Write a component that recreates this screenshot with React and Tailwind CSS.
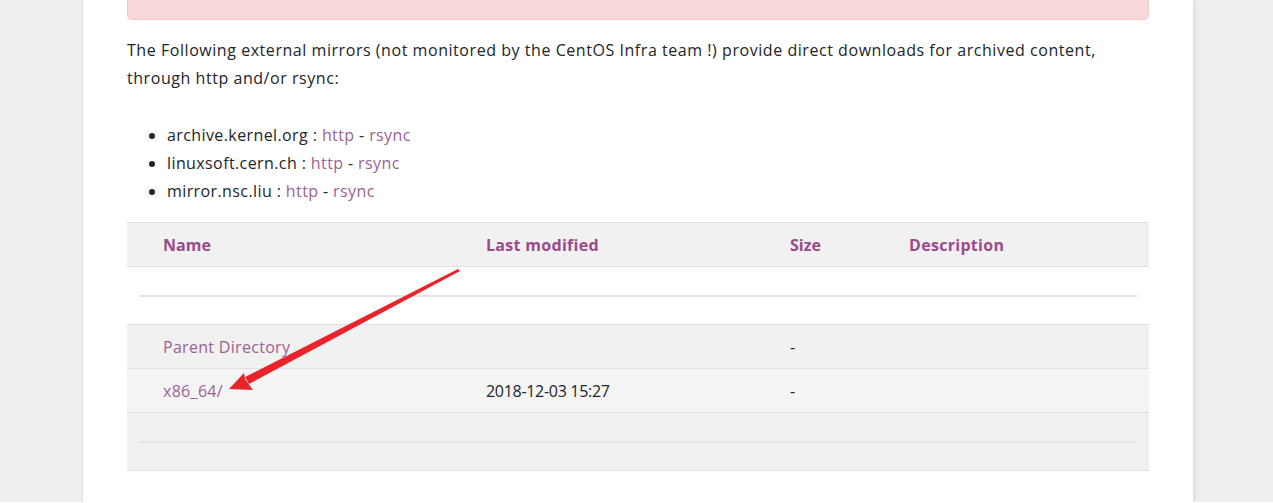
import React from 'react';

const mirrors = [
  { host: 'archive.kernel.org' },
  { host: 'linuxsoft.cern.ch' },
  { host: 'mirror.nsc.liu' },
];

function HrRow({ bg }) {
  return (
    <tr className={`${bg} border-b border-[#dee2e6]`}>
      <td colSpan={4} className="h-[58px] px-3">
        <div className="border-t-2 border-[#e4e4e6]" />
      </td>
    </tr>
  );
}

export default function App() {
  return (
    <div className="min-h-[503px] bg-[#eeeeee] font-['Open_Sans',sans-serif] text-[16px] text-[#212529]">
      <div className="ml-[82px] w-[1111px] min-h-[503px] bg-white border-l border-[#e0e0e0] shadow-[2px_0_3px_rgba(0,0,0,0.08)] relative">
        <div className="px-[44px]">
          {/* Alert */}
          <div className="h-[21px] -mt-[1px] w-[1022px] rounded-b-[5px] bg-[#f8d7da] border border-t-0 border-[#f5c6cb]" />

          <p className="mt-[16px] leading-[28px] tracking-[0.55px]">
            The Following external mirrors (not monitored by the CentOS Infra team !) provide direct downloads for archived content,
            <br />
            through http and/or rsync:
          </p>

          <ul className="mt-[29px] list-disc pl-[40px] leading-[28px] tracking-[0.4px]">
            {mirrors.map(m => (
              <li key={m.host}>
                {m.host} : <a href="#" className="text-[#9c6293]">http</a> - <a href="#" className="text-[#9c6293]">rsync</a>
              </li>
            ))}
          </ul>

          <table className="mt-[17px] w-[1022px] border-collapse text-left">
            <thead>
              <tr className="bg-[#f1f1f1] border-y border-[#dee2e6] h-[44px]">
                <th className="pl-[36px] w-[359px] font-bold text-[#9b4a8a]">Name</th>
                <th className="w-[304px] font-bold text-[#9b4a8a] tracking-[0.3px]">Last modified</th>
                <th className="w-[119px] font-bold text-[#9b4a8a]">Size</th>
                <th className="font-bold text-[#9b4a8a] tracking-[0.3px]">Description</th>
              </tr>
            </thead>
            <tbody>
              <HrRow bg="bg-white" />
              <tr className="bg-[#f1f1f1] border-b border-[#dee2e6] h-[44px]">
                <td className="pl-[36px] tracking-[0.3px]"><a href="#" className="text-[#9c6293]">Parent Directory</a></td>
                <td></td>
                <td>-</td>
                <td></td>
              </tr>
              <tr className="bg-[#f4f4f4] border-b border-[#dee2e6] h-[44px]">
                <td className="pl-[36px] tracking-[0.3px]"><a href="#" className="text-[#9c6293]">x86_64/</a></td>
                <td className="tracking-[-0.3px]">2018-12-03 15:27</td>
                <td>-</td>
                <td></td>
              </tr>
              <HrRow bg="bg-[#f1f1f1]" />
            </tbody>
          </table>
        </div>

        {/* annotation arrow */}
        <svg className="absolute left-0 top-0 pointer-events-none" width="1111" height="503">
          <polygon points="375,270 377,272 166,385 162,378" fill="#e8232a" />
          <polygon points="146,390 161,374 162,380 170,391" fill="#e8232a" />
        </svg>
      </div>
    </div>
  );
}
